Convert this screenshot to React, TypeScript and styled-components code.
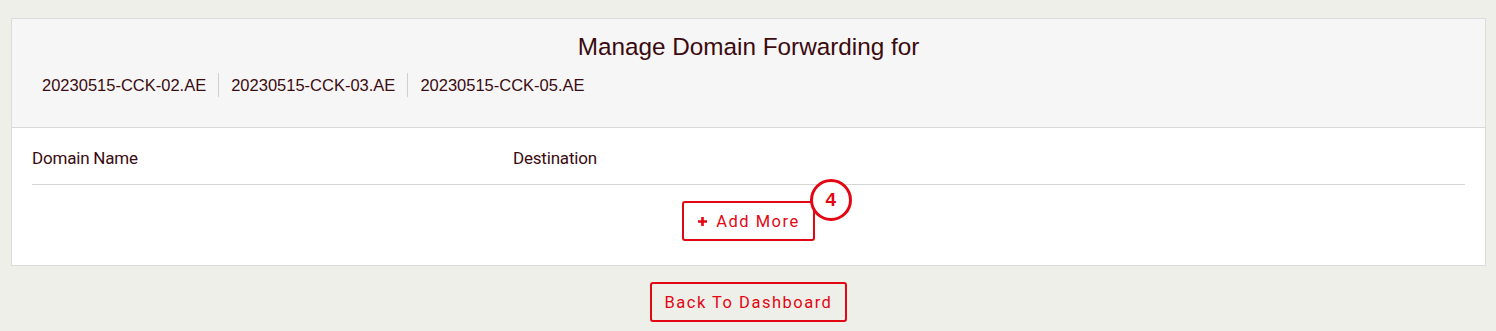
import React from 'react';
import styled, { createGlobalStyle } from 'styled-components';

const GlobalStyle = createGlobalStyle`
  html, body {
    margin: 0;
    padding: 0;
    background: #efefea;
  }
  body {
    font-family: "Liberation Sans", Arial, sans-serif;
    color: #3b0b10;
  }
`;

const Page = styled.div`
  padding: 18px 10px 10px 11px;
  display: flex;
  flex-direction: column;
  align-items: center;
`;

const Card = styled.div`
  width: 100%;
  box-sizing: border-box;
  background: #fff;
  border: 1px solid #dcdcdc;
`;

const CardHeader = styled.div`
  background: #f6f6f6;
  border-bottom: 1px solid #d8d8d8;
  padding: 13px 20px 30px;
`;

const Title = styled.h2`
  margin: 0;
  font-size: 24.3px;
  line-height: 30px;
  font-weight: 400;
  text-align: center;
  color: #3b0b10;
`;

const DomainList = styled.div`
  display: flex;
  margin-top: 11px;
`;

const DomainItem = styled.span`
  font-size: 16.5px;
  line-height: 24px;
  padding: 0 12px;
  border-left: 1px solid #cfcfcf;

  &:first-child {
    padding-left: 10px;
    border-left: none;
  }
`;

const CardBody = styled.div`
  padding: 0 20px 24px;
`;

const TableHead = styled.div`
  display: grid;
  grid-template-columns: 481px 1fr;
  padding: 20px 0 16px;
  border-bottom: 1px solid #d6d6d6;
  font-family: Roboto, "Liberation Sans", sans-serif;
  font-size: 17px;
  line-height: 20px;
  letter-spacing: -0.2px;
`;

const Actions = styled.div`
  display: flex;
  justify-content: center;
  padding-top: 16px;
`;

const OutlineButton = styled.button`
  position: relative;
  display: inline-flex;
  align-items: center;
  gap: 8px;
  height: 40px;
  padding: 0 13px;
  box-sizing: border-box;
  background: transparent;
  border: 2px solid #e30613;
  border-radius: 3px;
  color: #e30613;
  font-family: Roboto, "Liberation Sans", sans-serif;
  font-size: 16.5px;
  letter-spacing: 1.5px;
  cursor: pointer;
`;

const Badge = styled.span`
  position: absolute;
  top: -24px;
  right: -39px;
  width: 42px;
  height: 42px;
  box-sizing: border-box;
  border: 3px solid #e30613;
  border-radius: 50%;
  background: #fff;
  color: #e30613;
  font-family: "Liberation Sans", Arial, sans-serif;
  font-weight: 700;
  font-size: 19px;
  letter-spacing: 0;
  display: flex;
  align-items: center;
  justify-content: center;
`;

const Footer = styled.div`
  padding-top: 16px;
`;

const PlusIcon = () => (
  <svg width="11" height="11" viewBox="0 0 11 11">
    <path d="M5.5 1v9M1 5.5h9" stroke="#e30613" strokeWidth="2.6" />
  </svg>
);

const domains = ['20230515-CCK-02.AE', '20230515-CCK-03.AE', '20230515-CCK-05.AE'];

const App: React.FC = () => {
  return (
    <>
      <GlobalStyle />
      <Page>
        <Card>
          <CardHeader>
            <Title>Manage Domain Forwarding for</Title>
            <DomainList>
              {domains.map((d) => (
                <DomainItem key={d}>{d}</DomainItem>
              ))}
            </DomainList>
          </CardHeader>
          <CardBody>
            <TableHead>
              <span>Domain Name</span>
              <span>Destination</span>
            </TableHead>
            <Actions>
              <OutlineButton>
                <PlusIcon />
                Add More
                <Badge>4</Badge>
              </OutlineButton>
            </Actions>
          </CardBody>
        </Card>
        <Footer>
          <OutlineButton>Back To Dashboard</OutlineButton>
        </Footer>
      </Page>
    </>
  );
};

export default App;
